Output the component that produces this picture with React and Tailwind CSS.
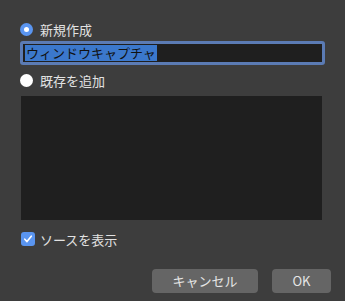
import React from 'react';

function Radio({ checked }) {
  return checked ? (
    <span className="flex h-[13px] w-[13px] items-center justify-center rounded-full bg-[#5a95f0]">
      <span className="h-[5px] w-[5px] rounded-full bg-white" />
    </span>
  ) : (
    <span className="h-[13px] w-[13px] rounded-full bg-white" />
  );
}

export default function App() {
  return (
    <div
      className="flex h-[301px] w-[345px] flex-col bg-[#3d3d3d] pl-[20px] pr-[20px] text-[13px] text-[#e2e2e2]"
      style={{ fontFamily: '"Noto Sans CJK JP", "Noto Sans", sans-serif' }}
    >
      <div className="mt-[21px] flex h-[16px] items-center gap-[7px]">
        <Radio checked />
        <span className="leading-none">新規作成</span>
      </div>

      <div className="mt-[4px] h-[24px] w-[305px] rounded-[3px] bg-[#5b7bb4] p-[3px]">
        <div className="flex h-full items-center bg-[#1f1f1f] pl-[2px]">
          <span className="bg-[#3b78cc] px-[1px] leading-[16px] text-[#111]">ウィンドウキャプチャ</span>
        </div>
      </div>

      <div className="mt-[7px] flex h-[16px] items-center gap-[7px]">
        <Radio />
        <span className="leading-none">既存を追加</span>
      </div>

      <div className="ml-[1px] mt-[8px] h-[124px] w-[301px] bg-[#1f1f1f]" />

      <div className="ml-[1px] mt-[11px] flex h-[16px] items-center gap-[5px]">
        <span className="flex h-[14px] w-[14px] items-center justify-center rounded-[3px] bg-[#5a95f0]">
          <svg width="10" height="10" viewBox="0 0 10 10" fill="none">
            <path d="M1.8 5.2 L4 7.6 L8.3 2.2" stroke="white" strokeWidth="1.6" strokeLinecap="round" strokeLinejoin="round" />
          </svg>
        </span>
        <span className="leading-none">ソースを表示</span>
      </div>

      <div className="mt-[22px] flex justify-end gap-[14px] pr-[-6px]">
        <button className="h-[24px] w-[106px] rounded-[4px] bg-[#656565] text-[13px] text-[#e6e6e6]">キャンセル</button>
        <button className="-mr-[6px] h-[24px] w-[59px] rounded-[4px] bg-[#656565] text-[13px] text-[#e6e6e6]">OK</button>
      </div>
    </div>
  );
}
